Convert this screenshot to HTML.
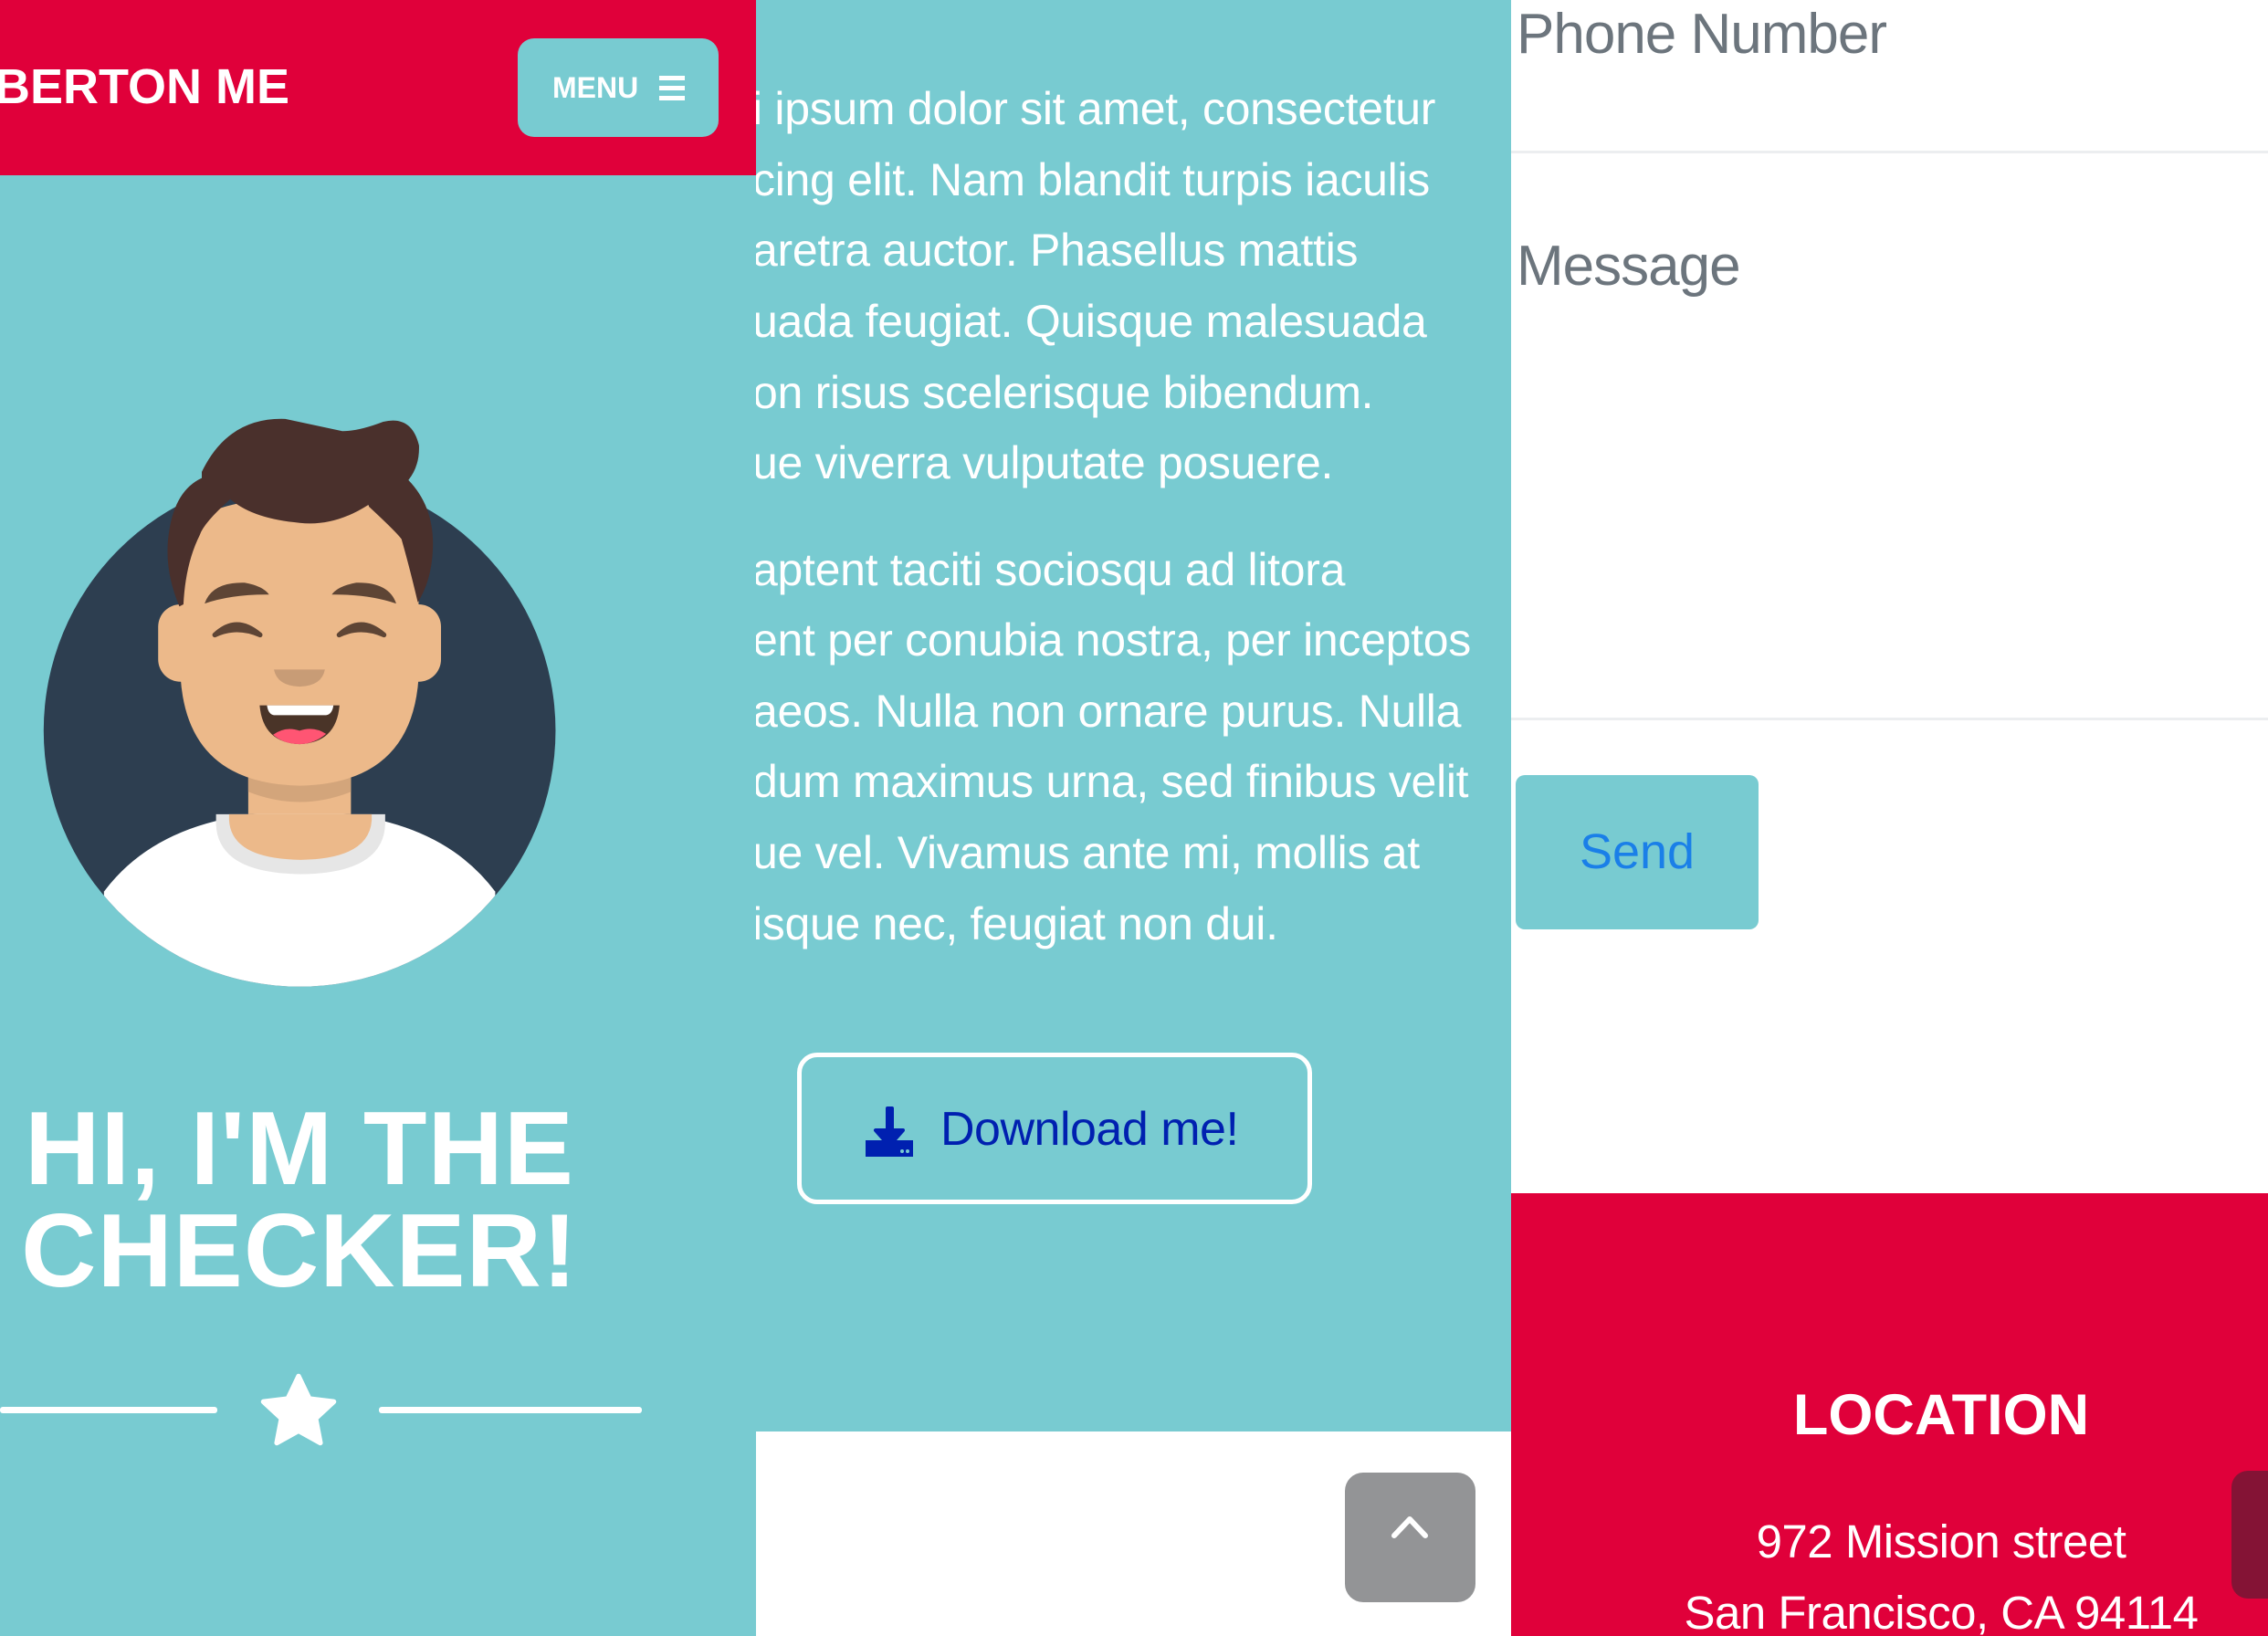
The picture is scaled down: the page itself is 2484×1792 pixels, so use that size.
<!DOCTYPE html>
<html><head><meta charset="utf-8"><style>
*{margin:0;padding:0;box-sizing:border-box}
body{width:2484px;height:1792px;position:relative;overflow:hidden;background:#fff;font-family:"Liberation Sans",sans-serif}
.abs{position:absolute}
#left{left:0;top:0;width:828px;height:1792px;background:#78cbd1;overflow:hidden}
#mid{left:828px;top:0;width:827px;height:1568px;background:#78cbd1;overflow:hidden}
#right{left:1655px;top:0;width:829px;height:1792px;background:#fff;overflow:hidden}
.pl{position:absolute;left:-4px;white-space:nowrap;color:#fff;font-size:50px;line-height:1;letter-spacing:-0.3px}
</style></head><body>
<div id="left" class="abs">
  <div class="abs" style="left:0;top:0;width:828px;height:192px;background:#e0003a"></div>
  <div class="abs" style="left:-6px;top:68px;color:#fff;font-weight:bold;font-size:54px;line-height:1;letter-spacing:0px">BERTON ME</div>
  <div class="abs" style="left:567px;top:42px;width:220px;height:108px;background:#78cbd1;border-radius:18px;color:#fff;font-weight:bold;font-size:32px;line-height:108px;padding-left:38px">MENU
    <span class="abs" style="left:155px;top:41px;width:28px;height:5px;background:#fff"></span>
    <span class="abs" style="left:155px;top:52px;width:28px;height:5px;background:#fff"></span>
    <span class="abs" style="left:155px;top:63px;width:28px;height:5px;background:#fff"></span>
  </div>
  <svg class="abs" style="left:0;top:412px" width="700" height="720" viewBox="0 0 1568 1613">
    <defs><clipPath id="c"><circle cx="735" cy="870" r="628"/></clipPath></defs>
    <circle cx="735" cy="870" r="628" fill="#2d3e50"/>
    <g clip-path="url(#c)">
      <path d="M255 1265 Q400 1070 735 1068 Q1070 1070 1215 1265 L1215 1600 L255 1600Z" fill="#fff"/>
      <path d="M530 1075 L945 1075 L945 1100 Q940 1220 738 1222 Q535 1220 530 1100Z" fill="#e6e6e6"/>
    </g>
    <path d="M562 1075 L912 1075 L912 1090 Q905 1185 738 1187 Q568 1185 562 1090Z" fill="#ecb98a"/>
    <rect x="609" y="960" width="252" height="115" fill="#ecb98a"/>
    <path d="M609 1020 Q735 1070 861 1020 L861 960 L609 960Z" fill="#d3a57b"/>
    <rect x="388" y="560" width="120" height="190" rx="55" fill="#ecb98a"/>
    <rect x="962" y="560" width="120" height="190" rx="55" fill="#ecb98a"/>
    <path d="M443 420 Q460 300 735 300 Q1010 300 1027 420 L1027 740 Q1010 1000 735 1005 Q460 1000 443 740Z" fill="#ecb98a"/>
    <path d="M440 565 Q400 470 415 380 Q430 280 495 250 L495 235 Q560 100 700 105 L840 135 Q880 135 940 112 Q1010 95 1028 170 Q1030 220 1002 255 Q1065 320 1062 420 Q1060 500 1025 555 Q1005 470 985 400 Q975 385 905 320 L905 315 Q820 370 735 360 Q620 350 565 302 Q500 360 490 390 Q455 460 450 560Z" fill="#4a302c"/>
    <path d="M502 558 Q520 505 600 507 Q645 515 660 536 Q570 535 502 558Z" fill="#5e4535"/>
    <path d="M972 558 Q954 505 874 507 Q829 515 814 536 Q904 535 972 558Z" fill="#5e4535"/>
    <path d="M527 635 Q580 585 638 635 Q580 610 527 635Z" stroke="#5e4535" stroke-width="12" fill="#5e4535" stroke-linejoin="round"/>
    <path d="M832 635 Q885 585 942 635 Q885 610 832 635Z" stroke="#5e4535" stroke-width="12" fill="#5e4535" stroke-linejoin="round"/>
    <path d="M672 720 L797 720 Q790 760 735 762 Q680 760 672 720Z" fill="#c89c76"/>
    <path d="M637 808 L833 808 Q825 900 735 903 Q645 900 637 808Z" fill="#4a3428"/>
    <path d="M655 808 L818 808 Q815 830 800 832 L672 832 Q658 830 655 808Z" fill="#fff"/>
    <path d="M670 880 Q700 858 735 870 Q770 858 800 878 Q770 903 735 903 Q695 903 670 880Z" fill="#ff5573"/>
  </svg>
  <div class="abs" style="left:0;top:1203px;width:656px;text-align:center;color:#fff;font-weight:bold;font-size:114px;line-height:112px;letter-spacing:1px">HI, I'M THE<br>CHECKER!</div>
  <div class="abs" style="left:0;top:1541px;width:238px;height:7px;background:#fff;border-radius:3px"></div>
  <div class="abs" style="left:415px;top:1541px;width:288px;height:7px;background:#fff;border-radius:3px"></div>
  <svg class="abs" style="left:282px;top:1502px" width="90" height="88" viewBox="0 0 24 24"><path d="M12 1.5l3.2 6.7 7.3.9-5.4 5 1.4 7.3L12 17.8l-6.5 3.6 1.4-7.3-5.4-5 7.3-.9z" fill="#fff" stroke="#fff" stroke-width="1.5" stroke-linejoin="round"/></svg>
</div>
<div id="mid" class="abs">
  <div class="pl" style="top:94px">i ipsum dolor sit amet, consectetur</div>
  <div class="pl" style="top:172px">cing elit. Nam blandit turpis iaculis</div>
  <div class="pl" style="top:249px">aretra auctor. Phasellus mattis</div>
  <div class="pl" style="top:327px">uada feugiat. Quisque malesuada</div>
  <div class="pl" style="top:405px">on risus scelerisque bibendum.</div>
  <div class="pl" style="top:482px">ue viverra vulputate posuere.</div>
  <div class="pl" style="top:599px">aptent taciti sociosqu ad litora</div>
  <div class="pl" style="top:676px">ent per conubia nostra, per inceptos</div>
  <div class="pl" style="top:754px">aeos. Nulla non ornare purus. Nulla</div>
  <div class="pl" style="top:831px">dum maximus urna, sed finibus velit</div>
  <div class="pl" style="top:909px">ue vel. Vivamus ante mi, mollis at</div>
  <div class="pl" style="top:987px">isque nec, feugiat non dui.</div>
  <div class="abs" style="left:45px;top:1153px;width:564px;height:166px;border:5px solid #fff;border-radius:22px">
    <svg class="abs" style="left:68px;top:54px" width="56" height="56" viewBox="0 0 56 56"><rect x="24" y="0" width="9" height="28" rx="2" fill="#0020b0"/><path d="M13 26 L43 26 L28 43Z" fill="#0020b0" stroke="#0020b0" stroke-width="4" stroke-linejoin="round"/><path d="M2 37 L21 37 L28 45 L35 37 L54 37 L54 55 L2 55Z" fill="#0020b0"/><circle cx="42" cy="49" r="2" fill="#78cbd1"/><circle cx="48" cy="49" r="2" fill="#78cbd1"/></svg>
    <div class="abs" style="left:152px;top:49px;color:#0020b0;font-size:52px;line-height:60px;letter-spacing:-0.5px">Download me!</div>
  </div>
</div>
<div class="abs" style="left:1473px;top:1613px;width:143px;height:142px;background:#939496;border-radius:20px">
  <svg class="abs" style="left:48px;top:45px" width="46" height="30" viewBox="0 0 46 30"><path d="M6 24 L23 6 L40 24" stroke="#fff" stroke-width="6" fill="none" stroke-linecap="round" stroke-linejoin="round"/></svg>
</div>
<div id="right" class="abs">
  <div class="abs" style="left:6px;top:3px;color:#6c757d;font-size:62px;line-height:70px;letter-spacing:-1px">Phone Number</div>
  <div class="abs" style="left:0;top:165px;width:829px;height:3px;background:#eceef0"></div>
  <div class="abs" style="left:6px;top:257px;color:#6c757d;font-size:62px;line-height:70px;letter-spacing:-1px">Message</div>
  <div class="abs" style="left:0;top:786px;width:829px;height:3px;background:#eceef0"></div>
  <div class="abs" style="left:5px;top:849px;width:266px;height:169px;background:#78cbd1;border-radius:10px;color:#1a7fe8;font-size:54px;line-height:169px;text-align:center">Send</div>
  <div class="abs" style="left:0;top:1307px;width:829px;height:485px;background:#e0003a"></div>
  <div class="abs" style="left:0;top:1512px;width:942px;text-align:center;color:#fff;font-weight:bold;font-size:63px;line-height:76px">LOCATION</div>
  <div class="abs" style="left:0;top:1650px;width:942px;text-align:center;color:#fff;font-size:51px;line-height:78px;letter-spacing:-0.5px">972 Mission street<br>San Francisco, CA 94114</div>
  <div class="abs" style="left:789px;top:1611px;width:80px;height:140px;background:#841335;border-radius:18px"></div>
</div>
</body></html>
